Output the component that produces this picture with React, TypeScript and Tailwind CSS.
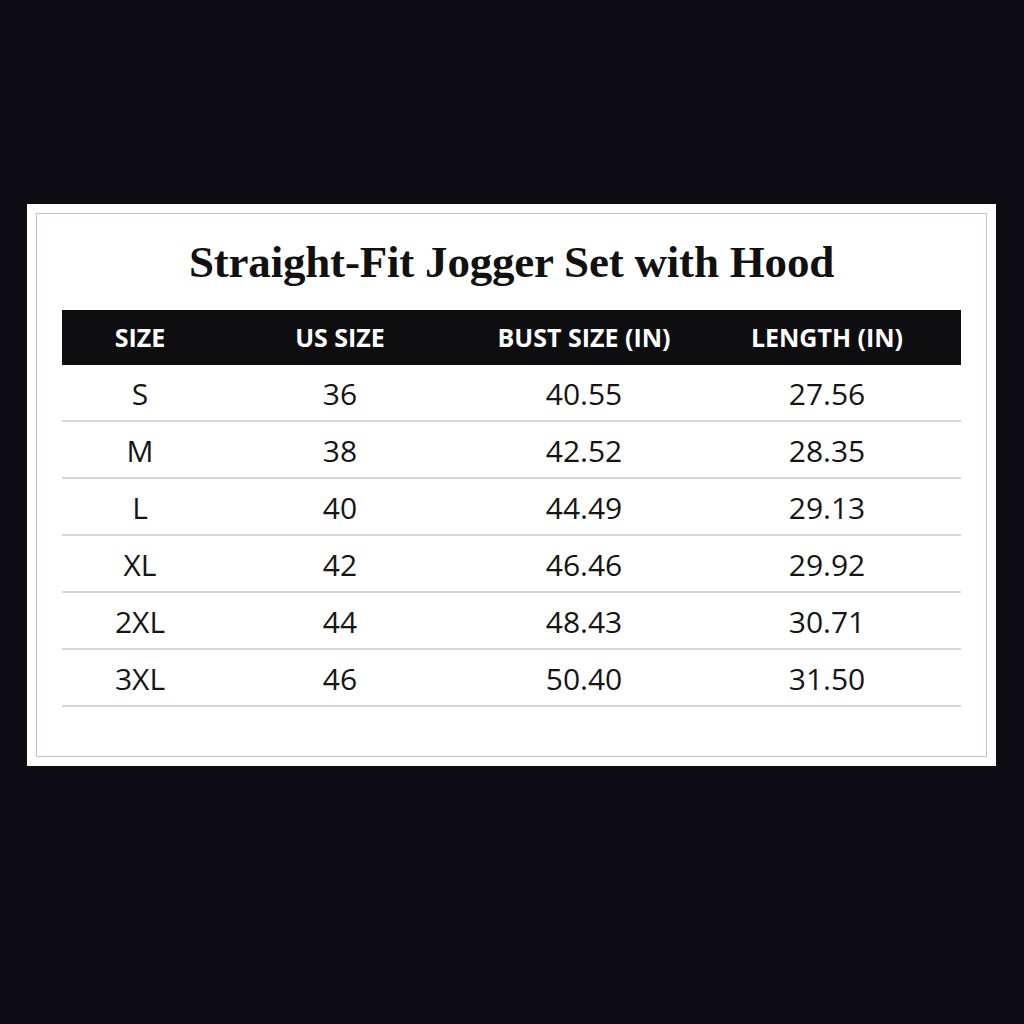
const ROWS = [
  ['S', '36', '40.55', '27.56'],
  ['M', '38', '42.52', '28.35'],
  ['L', '40', '44.49', '29.13'],
  ['XL', '42', '46.46', '29.92'],
  ['2XL', '44', '48.43', '30.71'],
  ['3XL', '46', '50.40', '31.50'],
];

const HEADERS = ['SIZE', 'US SIZE', 'BUST SIZE (IN)', 'LENGTH (IN)'];

const cols = 'grid grid-cols-[156px_244px_244px_242px]';

export default function App() {
  return (
    <div className="w-[1024px] h-[1024px] bg-[#0c0c12] pt-[204px] pl-[27px]">
      <div className="w-[969px] h-[562px] bg-white p-[9px]">
        <div className="h-full border border-[#cbbfbf] px-[25px] pt-[20px]">
          <h1 className="text-center text-[45px] leading-[56px] font-bold text-[#111] font-['Liberation_Serif',serif] tracking-[-0.2px]">
            Straight-Fit Jogger Set with Hood
          </h1>

          <div className="mt-[20px] font-['Open_Sans',sans-serif]">
            <div className={`${cols} h-[55px] items-center bg-[#0e0e10] text-white text-[25px] font-bold`}>
              {HEADERS.map(h => (
                <div key={h} className="text-center">{h}</div>
              ))}
            </div>

            {ROWS.map(r => (
              <div key={r[0]} className={`${cols} h-[57px] items-center border-b-2 border-[#d6d6d6] text-[30px] text-[#151515]`}>
                {r.map((c, i) => (
                  <div key={i} className="text-center pt-[1px]">{c}</div>
                ))}
              </div>
            ))}
          </div>
        </div>
      </div>
    </div>
  );
}
